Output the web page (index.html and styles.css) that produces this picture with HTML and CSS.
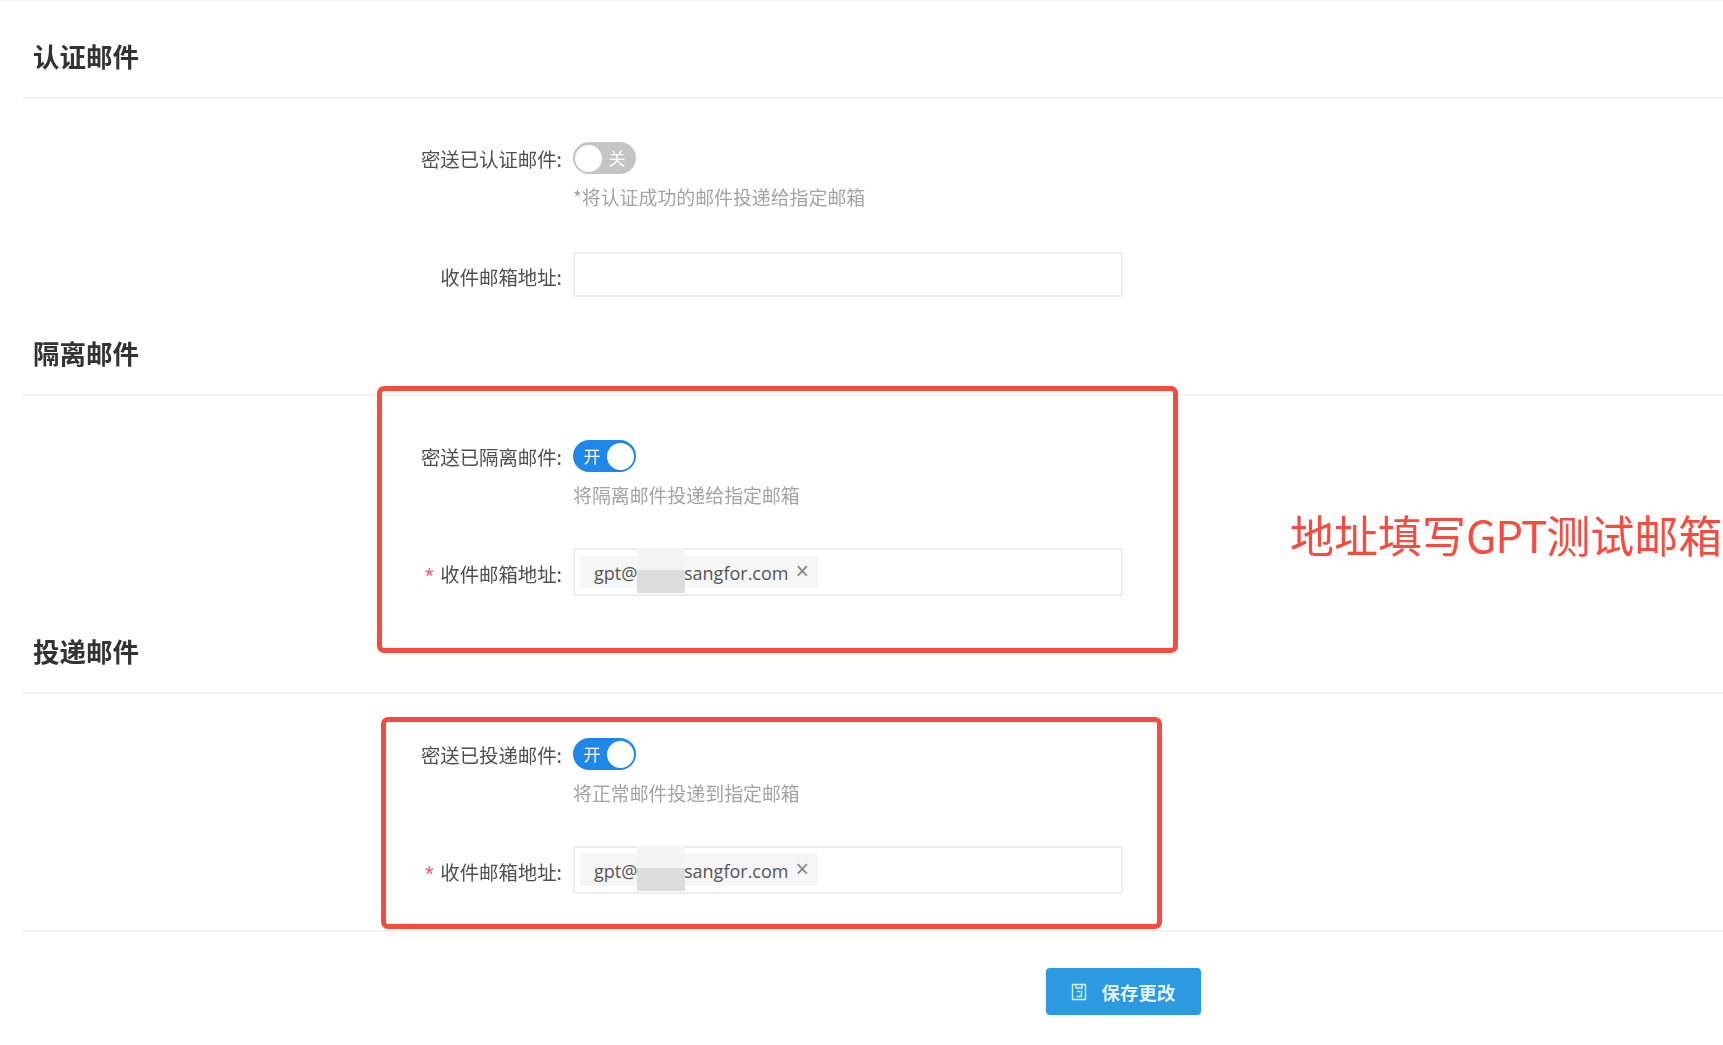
FILE: index.html
```html
<!DOCTYPE html>
<html lang="zh-CN">
<head>
<meta charset="utf-8">
<title>邮件设置</title>
<link rel="stylesheet" href="styles.css">
</head>
<body>
<main class="page">
  <section class="section section-first">
    <h2 class="section-title">认证邮件</h2>
    <div class="form-row">
      <label class="label">密送已认证邮件:</label>
      <div class="control">
        <span class="switch switch-off"><span class="knob"></span><span class="switch-text">关</span></span>
        <p class="hint">*将认证成功的邮件投递给指定邮箱</p>
      </div>
    </div>
    <div class="form-row form-row-input">
      <label class="label">收件邮箱地址:</label>
      <div class="control"><div class="input input-empty"></div></div>
    </div>
  </section>

  <section class="section section-mid">
    <h2 class="section-title">隔离邮件</h2>
    <div class="form-row">
      <label class="label">密送已隔离邮件:</label>
      <div class="control">
        <span class="switch switch-on"><span class="switch-text">开</span><span class="knob"></span></span>
        <p class="hint">将隔离邮件投递给指定邮箱</p>
      </div>
    </div>
    <div class="form-row form-row-input">
      <label class="label"><span class="star">*</span>收件邮箱地址:</label>
      <div class="control">
        <div class="input">
          <span class="tag"><span class="tag-user">gpt@</span><span class="tag-domain">sangfor.com</span><span class="tag-close">×</span></span>
          <span class="mask"></span>
        </div>
      </div>
    </div>
  </section>

  <section class="section section-last">
    <h2 class="section-title">投递邮件</h2>
    <div class="form-row">
      <label class="label">密送已投递邮件:</label>
      <div class="control">
        <span class="switch switch-on"><span class="switch-text">开</span><span class="knob"></span></span>
        <p class="hint">将正常邮件投递到指定邮箱</p>
      </div>
    </div>
    <div class="form-row form-row-input">
      <label class="label"><span class="star">*</span>收件邮箱地址:</label>
      <div class="control">
        <div class="input">
          <span class="tag"><span class="tag-user">gpt@</span><span class="tag-domain">sangfor.com</span><span class="tag-close">×</span></span>
          <span class="mask"></span>
        </div>
      </div>
    </div>
  </section>

  <div class="actions">
    <button class="save" type="button">
      <svg class="save-icon" viewBox="0 0 16 18" aria-hidden="true"><path d="M1.5 1.5h13v15h-13z M5 1.5v3.5h6V1.5 M5.5 13.5h5 M10.5 7.5v6 M6 8.5h3"/></svg>
      <span>保存更改</span>
    </button>
  </div>
</main>

<div class="mark mark-one"></div>
<div class="mark mark-two"></div>
<div class="note">地址填写<span class="note-latin">GPT</span>测试邮箱!</div>
</body>
</html>
```

FILE: styles.css
```css
html, body {
  margin: 0;
  height: 100%;
  background: #fff;
  overflow: hidden;
}

body {
  position: relative;
  font-family: "Noto Sans CJK SC", "Open Sans", sans-serif;
  border-top: 1px solid #eef6f8;
  box-sizing: border-box;
}

.page {
  margin-left: 23px;
  filter: blur(0.55px);
}

.section-mid {
  margin-top: -1px;
}

.section-title {
  margin: 0;
  padding: 40px 0 26px 10px;
  height: 30px;
  font-size: 26.5px;
  line-height: 30px;
  font-weight: 700;
  color: #333;
  border-bottom: 2px solid #f1f1f1;
}

.form-row {
  display: grid;
  grid-template-columns: 550px 1fr;
  margin-top: 44px;
}

.form-row-input {
  margin-top: 41px;
}

.section-first .form-row {
  margin-top: 43px;
}

.section-first .form-row-input {
  margin-top: 42px;
}

.label {
  display: flex;
  justify-content: flex-end;
  align-items: center;
  height: 32px;
  padding-right: 11px;
  font-size: 19.4px;
  color: #4f4f4f;
  white-space: nowrap;
}

.form-row-input .label {
  box-sizing: border-box;
  height: 48px;
  padding-top: 3px;
}

.star {
  margin: 7px 5px 0 0;
  font-size: 25px;
  line-height: 25px;
  color: #f0708a;
}

.control {
  min-width: 0;
}

.switch {
  display: flex;
  align-items: center;
  justify-content: space-between;
  box-sizing: border-box;
  width: 63px;
  height: 32px;
  padding: 0 2px;
  border-radius: 16px;
  color: #fff;
  font-size: 17px;
}

.switch-off {
  background: #c4c4c4;
}

.switch-on {
  background: #1f87e8;
}

.switch-text {
  flex: 1;
  text-align: center;
  line-height: 28px;
}

.switch-on .switch-text {
  flex: 0 0 30px;
  margin-left: 2px;
}

.switch-off .switch-text {
  padding-right: 2px;
}

.knob {
  flex: none;
  width: 27px;
  height: 27px;
  background: #fff;
  border-radius: 50%;
}

.hint {
  margin: 11px 0 0;
  font-size: 18.9px;
  line-height: 24px;
  color: #a3a3a3;
  white-space: nowrap;
}

.input {
  position: relative;
  display: flex;
  align-items: center;
  box-sizing: border-box;
  width: 550px;
  height: 48px;
  padding-left: 5px;
  background: #fff;
  border: 2px solid #ececec;
  border-radius: 3px;
}

.input-empty {
  height: 45px;
  margin-top: 1px;
}

.tag {
  display: flex;
  align-items: center;
  height: 32px;
  padding: 2px 9px 0 14px;
  box-sizing: border-box;
  background: #f6f6f6;
  font-family: "Open Sans", sans-serif;
  font-size: 18px;
  color: #555;
}

.tag-user {
  width: 43px;
}

.tag-domain {
  margin-left: 47px;
}

.tag-close {
  margin: -3px 0 0 7px;
  font-size: 23px;
  line-height: 23px;
  color: #888;
  font-family: "Liberation Sans", sans-serif;
}

.mask {
  position: absolute;
  left: 62px;
  top: -2px;
  width: 48px;
  height: 45px;
  background: linear-gradient(#f4f4f4 0 22px, #dcdcdc 22px);
}

.section-last {
  padding-bottom: 36px;
  border-bottom: 2px solid #f1f1f1;
}

.actions {
  padding: 36px 0 0 1023px;
}

.save {
  display: flex;
  align-items: center;
  justify-content: center;
  gap: 14px;
  width: 155px;
  height: 47px;
  padding: 0;
  border: 0;
  border-radius: 4px;
  background: #2b9ae0;
  color: #e2f3fd;
  font: 700 18.5px "Noto Sans CJK SC", sans-serif;
}

.save-icon {
  width: 16px;
  height: 18px;
  fill: none;
  stroke: #d5eefc;
  stroke-width: 1.4;
}

.mark {
  position: absolute;
  box-sizing: border-box;
  border: 5px solid #f54c40;
  border-radius: 7px;
}

.mark-one {
  left: 377px;
  top: 385px;
  width: 801px;
  height: 267px;
}

.mark-two {
  left: 381px;
  top: 716px;
  width: 781px;
  height: 212px;
}

.note {
  position: absolute;
  left: 1290px;
  top: 502px;
  font-family: "Noto Sans CJK SC", sans-serif;
  font-size: 44px;
  line-height: 62px;
  font-weight: 400;
  color: #f54c40;
  white-space: nowrap;
}

.note-latin {
  letter-spacing: -1px;
}
```
